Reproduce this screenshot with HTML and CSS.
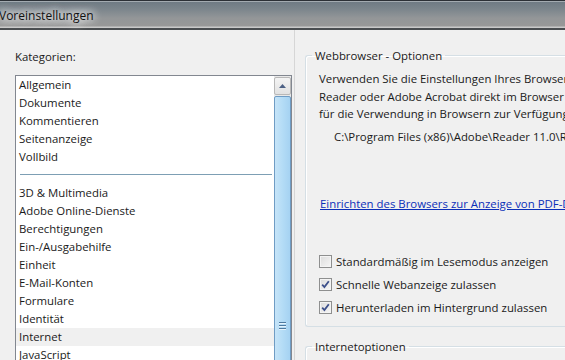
FILE: index.html
```html
<!DOCTYPE html>
<html lang="de">
<head>
<meta charset="utf-8">
<title>Voreinstellungen</title>
<link rel="stylesheet" href="styles.css">
</head>
<body>
<div class="window">
  <div class="titlebar"><span class="title">Voreinstellungen</span></div>
  <div class="content">
    <div class="left">
      <div class="label">Kategorien:</div>
      <div class="listbox">
        <ul class="items">
          <li class="item">Allgemein</li>
          <li class="item">Dokumente</li>
          <li class="item">Kommentieren</li>
          <li class="item">Seitenanzeige</li>
          <li class="item">Vollbild</li>
          <li class="sep"><span class="sep-line"></span></li>
          <li class="item">3D &amp; Multimedia</li>
          <li class="item">Adobe Online-Dienste</li>
          <li class="item">Berechtigungen</li>
          <li class="item">Ein-/Ausgabehilfe</li>
          <li class="item">Einheit</li>
          <li class="item">E-Mail-Konten</li>
          <li class="item">Formulare</li>
          <li class="item">Identität</li>
          <li class="item selected">Internet</li>
          <li class="item">JavaScript</li>
        </ul>
        <div class="scrollbar">
          <div class="scroll-btn"><svg width="7" height="4" viewBox="0 0 7 4"><path d="M0 4 L3.5 0 L7 4 Z" fill="#4d6185"/></svg></div>
          <div class="thumb"><span class="grip"></span><span class="grip"></span><span class="grip"></span></div>
        </div>
      </div>
    </div>
    <div class="divider"></div>
    <div class="right">
      <fieldset class="group">
        <legend class="legend">Webbrowser - Optionen</legend>
        <p class="desc">Verwenden Sie die Einstellungen Ihres Browsers, um PDF-Dokumente in Adobe<br>Reader oder Adobe Acrobat direkt im Browser zu öffnen. Dieses Programm steht<br>für die Verwendung in Browsern zur Verfügung:</p>
        <p class="path">C:\Program Files (x86)\Adobe\Reader 11.0\Reader\AcroRd32.exe</p>
        <a class="link" href="#">Einrichten des Browsers zur Anzeige von PDF-Dokumenten</a>
        <div class="checks">
          <label class="check"><span class="box"></span>Standardmäßig im Lesemodus anzeigen</label>
          <label class="check"><span class="box checked"><svg width="9" height="9" viewBox="0 0 9 9"><path d="M1.2 4.6 L3.4 7 L7.8 1.2" fill="none" stroke="#3c4f8a" stroke-width="1.8"/></svg></span>Schnelle Webanzeige zulassen</label>
          <label class="check"><span class="box checked"><svg width="9" height="9" viewBox="0 0 9 9"><path d="M1.2 4.6 L3.4 7 L7.8 1.2" fill="none" stroke="#3c4f8a" stroke-width="1.8"/></svg></span>Herunterladen im Hintergrund zulassen</label>
        </div>
      </fieldset>
      <fieldset class="group group2">
        <legend class="legend">Internetoptionen</legend>
      </fieldset>
    </div>
  </div>
</div>
</body>
</html>
```
FILE: styles.css
```css
html, body {
  margin: 0;
  padding: 0;
}
body {
  width: 565px;
  height: 360px;
  overflow: hidden;
  background: #f0f0f0;
  font-family: "Open Sans", "Noto Sans", sans-serif;
  font-size: 11.4px;
  color: #1a1a1a;
}
.window {
  width: 565px;
  height: 360px;
  overflow: hidden;
  display: flex;
  flex-direction: column;
}
.titlebar {
  height: 27px;
  flex: none;
  border-top: 1px solid #2b3036;
  border-bottom: 2px solid #4a4d50;
  background: linear-gradient(to bottom, #d6dadd 0, #6f7b84 1px, #7b858c 8px, #939698 17px, #989898 25px, #c9c9c9 26px);
  display: flex;
  align-items: center;
  white-space: nowrap;
}
.title {
  margin-left: -1px;
  margin-top: 2px;
  font-size: 12px;
  color: #111;
  text-shadow: 0 0 8px #fff, 0 0 10px #fff, 0 0 12px #fff;
}
.content {
  flex: 1;
  display: flex;
  min-height: 0;
}
.left {
  width: 276px;
  flex: none;
  padding: 18px 0 0 15px;
}
.label {
  height: 17px;
  line-height: 17px;
  margin-bottom: 10px;
}
.listbox {
  display: flex;
  width: 275px;
  height: 300px;
  border: 1px solid #828790;
  border-bottom: none;
  background: #fff;
}
.items {
  list-style: none;
  margin: 0;
  padding: 0;
  flex: 1;
}
.item {
  height: 18px;
  line-height: 18px;
  padding-left: 3px;
  white-space: nowrap;
}
.item.selected {
  background: #f0f0f0;
}
.sep {
  height: 18px;
  display: flex;
  align-items: center;
  padding: 0 0 1px 4px;
  box-sizing: border-box;
}
.sep-line {
  width: 252px;
  height: 1px;
  background: #7d9fb4;
}
.scrollbar {
  width: 17px;
  flex: none;
  display: flex;
  flex-direction: column;
  padding-top: 1px;
  background: #e9e9e9;
}
.scroll-btn {
  height: 18px;
  margin: 0 0 1px 0;
  border: 1px solid #b8b8b8;
  border-radius: 2px;
  background: linear-gradient(to bottom, #f4f4f4, #e2e2e2);
  display: flex;
  align-items: center;
  justify-content: center;
  box-sizing: border-box;
}
.thumb {
  flex: 1;
  border: 1px solid #6f9cc4;
  border-radius: 2px;
  background: linear-gradient(to right, #c6e4f8, #b4dcf6 50%, #a5d2f2);
  display: flex;
  flex-direction: column;
  align-items: center;
  padding-top: 225px;
  gap: 2px;
}
.grip {
  width: 7px;
  height: 1px;
  background: #4f7aa0;
  box-shadow: 0 1px 0 #e6f4fd;
}
.divider {
  width: 1px;
  flex: none;
  margin-left: 3px;
  background: #d6d6d6;
}
.right {
  flex: 1;
  padding: 17px 0 0 10px;
  white-space: nowrap;
  overflow: hidden;
  display: flex;
  flex-direction: column;
}
.group {
  margin: 0;
  padding: 0 0 0 13px;
  border: 1px solid #d5dfe5;
  border-right: none;
  border-radius: 3px 0 0 3px;
  box-shadow: inset 1px 1px 0 #fff;
  height: 280px;
  box-sizing: border-box;
  min-width: 0;
  flex: none;
}
.legend {
  padding: 0 3px 0 3px;
  margin-left: -7px;
  line-height: 17px;
}
.desc {
  margin: 6px 0 0 0;
  line-height: 17.5px;
}
.path {
  margin: 5px 0 0 15px;
  line-height: 17px;
}
.link {
  display: block;
  margin: 50px 0 0 1px;
  line-height: 17px;
  color: #0b2fb8;
  text-decoration: underline;
}
.checks {
  margin-top: 41px;
  display: flex;
  flex-direction: column;
  gap: 6px;
}
.check {
  display: flex;
  align-items: center;
  height: 17px;
  gap: 4px;
}
.box {
  width: 13px;
  height: 13px;
  box-sizing: border-box;
  border: 1px solid #8e8f8f;
  background: linear-gradient(135deg, #dcdcdc, #f6f6f6);
  box-shadow: inset 0 0 0 1px #f4f4f4;
  display: flex;
  align-items: center;
  justify-content: center;
}
.group2 {
  margin-top: 11px;
  height: 60px;
}
```
